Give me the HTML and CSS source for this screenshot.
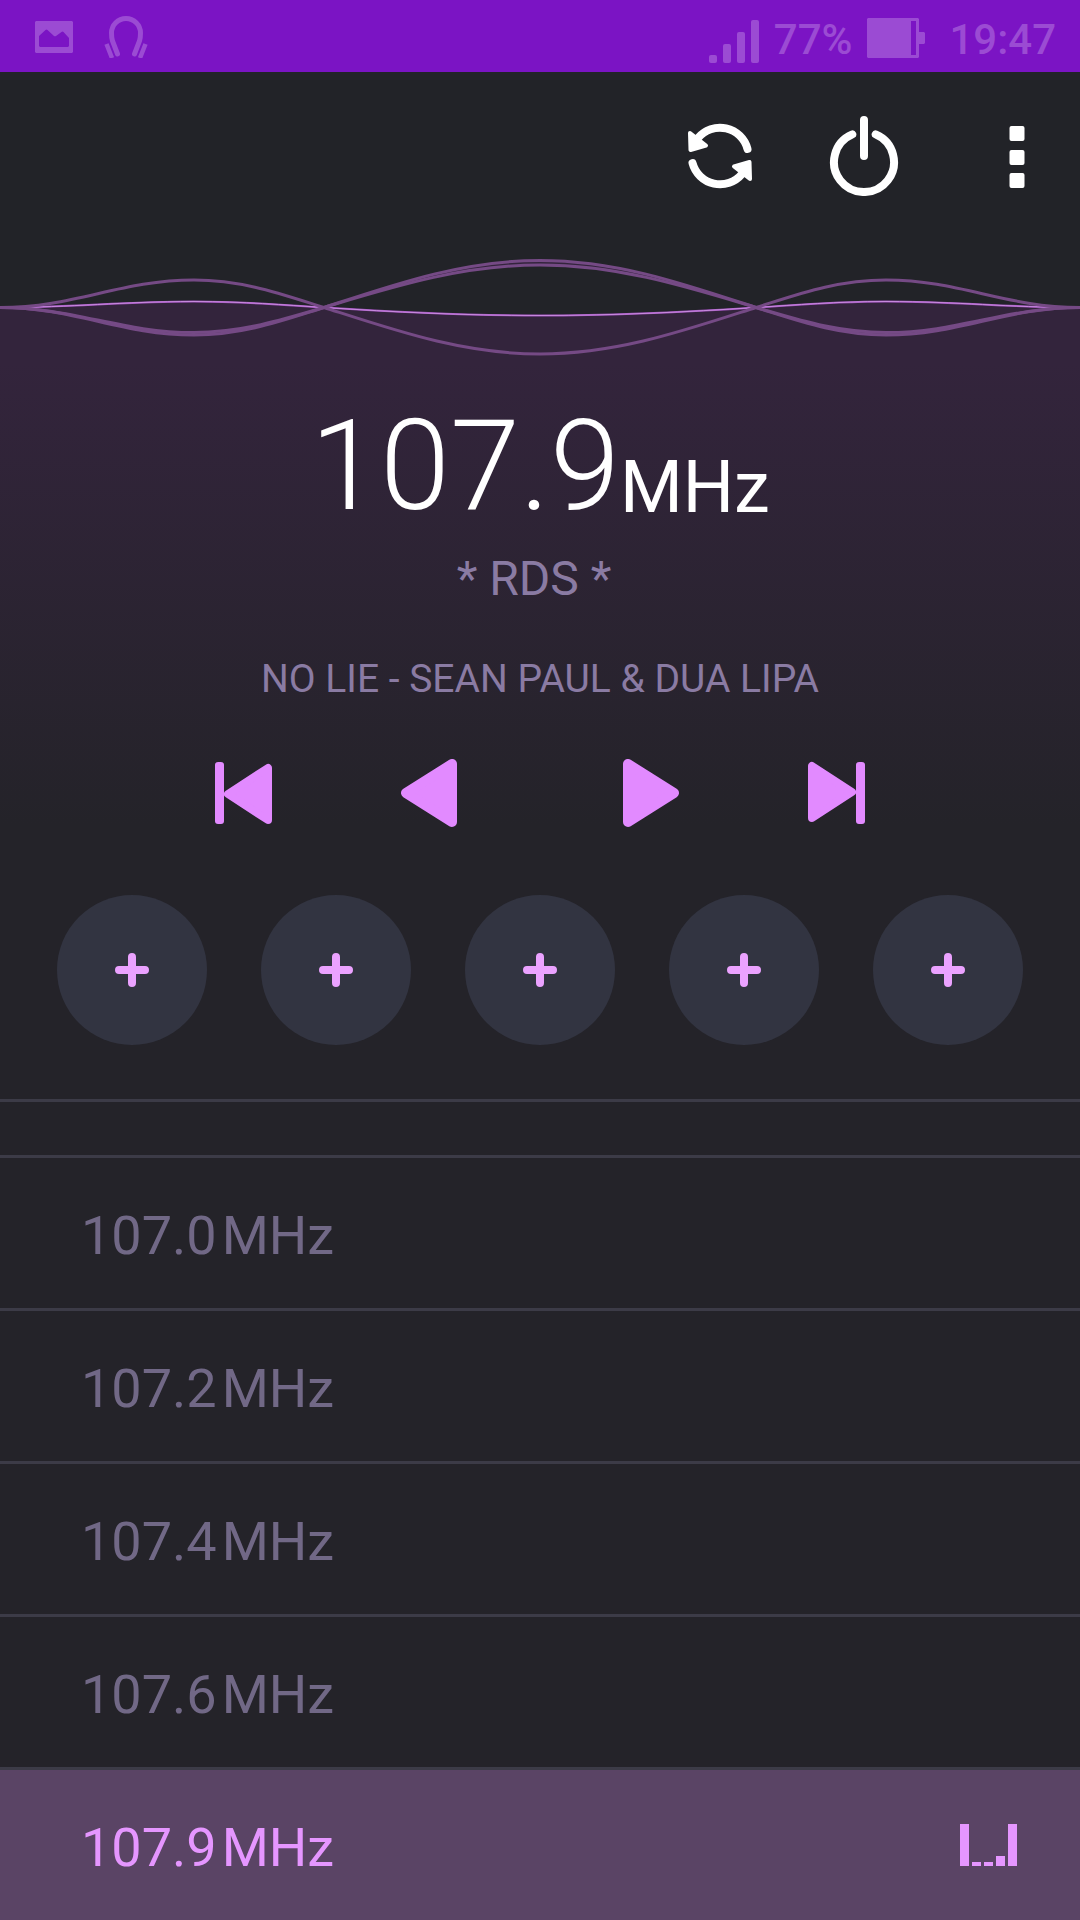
FILE: index.html
```html
<!DOCTYPE html>
<html lang="en">
<head>
<meta charset="utf-8">
<meta name="viewport" content="width=device-width, initial-scale=1">
<title>FM Radio</title>
<link rel="stylesheet" href="styles.css">
</head>
<body>
<header class="status">
  <div class="status-group status-left">
    <svg width="38" height="32" viewBox="0 0 38 32" aria-hidden="true"><path fill="currentColor" fill-rule="evenodd" d="M1 0H37L38 1V31L37 32H1L0 31V1ZM4 15V25L5 26H33L34 25V17L28.500 11Q27.500 10 26.500 11L21 15Q20 15.500 19 15L12.500 9Q11.500 8 10.500 9Z"/></svg>
    <svg width="44" height="42" viewBox="0 0 44 42" fill="none" stroke="currentColor" stroke-linecap="round" aria-hidden="true"><path stroke-width="5" d="M13.500 38L8.500 25Q7.500 22 7.500 17A14.300 14.300 0 0 1 36.500 17Q36.500 22 35.500 25L30.500 38"/><path stroke-width="4.500" stroke-linecap="butt" d="M2.500 28L8 42M41.500 28L36 42"/></svg>
  </div>
  <div class="status-group status-right">
    <svg width="50" height="43" viewBox="0 0 50 43" fill="currentColor" aria-hidden="true"><rect y="35" width="8" height="8" rx="2"/><rect x="14" y="24" width="8" height="19" rx="2"/><rect x="28" y="12" width="8" height="31" rx="2"/><rect x="42" width="8" height="43" rx="2"/></svg>
    <span class="battery-level">77%</span>
    <svg width="58" height="40" viewBox="0 0 58 40" aria-hidden="true"><path fill="currentColor" fill-rule="evenodd" d="M1 0H51L52 1V14H57L58 15V25L57 26H52V39L51 40H1L0 39V1ZM44 3V37H49V3Z"/></svg>
    <time class="clock">19:47</time>
  </div>
</header>

<main>
  <div class="toolbar">
    <button class="icon-button" type="button" aria-label="Rescan">
      <svg width="80" height="80" viewBox="-40 -40 80 80" aria-hidden="true">
        <g id="sync-half"><path d="M27.500 -7A28.500 28.500 0 0 0 -22 -18" fill="none" stroke="#fff" stroke-width="8" stroke-linecap="round"/><path d="M-30 -23L-14 -10.500L-29.500 -6Z" fill="#fff" stroke="#fff" stroke-width="4" stroke-linejoin="round"/></g>
        <use href="#sync-half" transform="rotate(180)"/>
      </svg>
    </button>
    <button class="icon-button" type="button" aria-label="Power">
      <svg width="80" height="80" viewBox="0 0 80 80" fill="none" stroke="#fff" stroke-width="8" stroke-linecap="round" aria-hidden="true"><path d="M40 4V40M28.300 18.400A30 30 0 1 0 51.700 18.400"/></svg>
    </button>
    <button class="icon-button icon-button-menu" type="button" aria-label="More options">
      <svg width="80" height="80" viewBox="0 0 80 80" fill="#fff" aria-hidden="true"><rect x="33.500" y="10" width="15" height="15" rx="2"/><rect x="33.500" y="34" width="15" height="15" rx="2"/><rect x="33.500" y="57" width="15" height="15" rx="2"/></svg>
    </button>
  </div>

  <svg class="wave" viewBox="0 0 1080 110" preserveAspectRatio="none" aria-hidden="true">
    <path fill="#33243c" d="M0 53.500C75 53.500 120 47.500 194 47.500C244 47.500 284 51 324 53.500C394 58 462 61.500 540 61.500C618 61.500 686 58 756 53.500C796 51 836 47.500 886 47.500C960 47.500 1005 53.500 1080 53.500V110H0Z"/>
    <path fill="#33243c" d="M324 53.500C394 31 462 6.500 540 6.500C618 6.500 686 31 756 53.500C686 33 618 11 540 11C462 11 394 33 324 53.500Z"/>
    <g fill="none">
      <path stroke="#a052bd" stroke-width="2" d="M0 53.500C75 53.500 120 47.500 194 47.500C244 47.500 284 51 324 53.500C394 58 462 61.500 540 61.500C618 61.500 686 58 756 53.500C796 51 836 47.500 886 47.500C960 47.500 1005 53.500 1080 53.500"/>
      <path stroke="#c88ade" stroke-width="1" d="M0 53.500C75 53.500 120 47.500 194 47.500C244 47.500 284 51 324 53.500C394 58 462 61.500 540 61.500C618 61.500 686 58 756 53.500C796 51 836 47.500 886 47.500C960 47.500 1005 53.500 1080 53.500"/>
      <g stroke="#754a85" stroke-width="3">
        <path d="M0 53.500C75 53.500 120 26 194 26C244 26 284 41 324 53.500C394 76 462 100 540 100C618 100 686 76 756 53.500C796 41 836 26 886 26C960 26 1005 53.500 1080 53.500"/>
        <path d="M0 53.500C75 53.500 120 81 194 81C244 81 284 66 324 53.500C394 30.500 462 6.500 540 6.500C618 6.500 686 30.500 756 53.500C796 66 836 81 886 81C960 81 1005 53.500 1080 53.500"/>
        <path d="M0 53.500C75 53.500 120 78.500 194 78.500C244 78.500 284 65 324 53.500C394 32.500 462 11 540 11C618 11 686 32.500 756 53.500C796 65 836 78.500 886 78.500C960 78.500 1005 53.500 1080 53.500"/>
      </g>
    </g>
  </svg>

  <section class="tuner">
    <h1 class="frequency"><span class="frequency-value">107.9</span><span class="frequency-unit">MHz</span></h1>
    <p class="station">* RDS *&nbsp;</p>
    <p class="song">NO LIE - SEAN PAUL &amp; DUA LIPA</p>

    <div class="transport">
      <div class="transport-group">
        <button class="transport-button" type="button" aria-label="Previous station">
          <svg width="64" height="68" viewBox="0 0 64 68" fill="currentColor" stroke="currentColor" stroke-linejoin="round" aria-hidden="true"><rect x="3" y="3" width="9" height="62" rx="3" stroke="none"/><path stroke-width="8" d="M16 35L56 9V61Z"/></svg>
        </button>
        <button class="transport-button" type="button" aria-label="Tune down">
          <svg width="64" height="68" viewBox="0 0 64 68" fill="currentColor" stroke="currentColor" stroke-linejoin="round" aria-hidden="true"><path stroke-width="10" d="M10 34L56 5V63Z"/></svg>
        </button>
      </div>
      <div class="transport-group">
        <button class="transport-button" type="button" aria-label="Tune up">
          <svg width="64" height="68" viewBox="0 0 64 68" fill="currentColor" stroke="currentColor" stroke-linejoin="round" aria-hidden="true"><path stroke-width="10" d="M54 34L8 5V63Z"/></svg>
        </button>
        <button class="transport-button" type="button" aria-label="Next station">
          <svg width="64" height="68" viewBox="0 0 64 68" fill="currentColor" stroke="currentColor" stroke-linejoin="round" aria-hidden="true"><rect x="52" y="3" width="9" height="62" rx="3" stroke="none"/><path stroke-width="8" d="M48 33L8 7V59Z"/></svg>
        </button>
      </div>
    </div>

    <div class="presets">
      <button class="preset" type="button" aria-label="Add preset 1"><svg width="34" height="34" viewBox="0 0 34 34" aria-hidden="true"><path d="M17 4V30M4 17H30"/></svg></button>
      <button class="preset" type="button" aria-label="Add preset 2"><svg width="34" height="34" viewBox="0 0 34 34" aria-hidden="true"><path d="M17 4V30M4 17H30"/></svg></button>
      <button class="preset" type="button" aria-label="Add preset 3"><svg width="34" height="34" viewBox="0 0 34 34" aria-hidden="true"><path d="M17 4V30M4 17H30"/></svg></button>
      <button class="preset" type="button" aria-label="Add preset 4"><svg width="34" height="34" viewBox="0 0 34 34" aria-hidden="true"><path d="M17 4V30M4 17H30"/></svg></button>
      <button class="preset" type="button" aria-label="Add preset 5"><svg width="34" height="34" viewBox="0 0 34 34" aria-hidden="true"><path d="M17 4V30M4 17H30"/></svg></button>
    </div>
  </section>

  <ul class="channels">
    <li><button class="channel" type="button"><span class="channel-name"><span>107.0</span><span>MHz</span></span></button></li>
    <li><button class="channel" type="button"><span class="channel-name"><span>107.2</span><span>MHz</span></span></button></li>
    <li><button class="channel" type="button"><span class="channel-name"><span>107.4</span><span>MHz</span></span></button></li>
    <li><button class="channel" type="button"><span class="channel-name"><span>107.6</span><span>MHz</span></span></button></li>
    <li><button class="channel channel-active" type="button" aria-current="true"><span class="channel-name"><span>107.9</span><span>MHz</span></span>
      <svg width="57" height="42" viewBox="0 0 57 42" fill="currentColor" aria-hidden="true"><path d="M0 0H9V42H0ZM12 38H21V42H12ZM24 38H33V42H24ZM36 32H45V42H36ZM48 0H57V42H48Z"/></svg></button></li>
  </ul>
</main>
</body>
</html>
```
FILE: styles.css
```css
* {
  box-sizing: border-box;
}

body {
  margin: 0;
  background: #242329;
  color: #fff;
  font-family: Roboto, "Liberation Sans", sans-serif;
}

button {
  padding: 0;
  border: 0;
  background: none;
  color: inherit;
  font: inherit;
  cursor: pointer;
}

svg {
  display: block;
  flex: none;
}

/* System status bar */
.status {
  display: flex;
  justify-content: space-between;
  height: 72px;
  padding: 0 24px 0 35px;
  background: #7b14c4;
  color: #9b4bd3;
  font-size: 42px;
  font-weight: 500;
  line-height: 48px;
}

.status-group {
  display: flex;
  align-items: center;
}

.status-left {
  gap: 31px;
  padding-top: 2px;
}

.status-right {
  gap: 15px;
}

.battery-level,
.clock {
  padding-top: 8px;
}

.status-right svg {
  margin-top: 4px;
}

.status-right svg:first-child {
  margin-top: 11px;
}

.clock {
  margin-left: 9px;
}

/* Actions */
.toolbar {
  display: flex;
  justify-content: flex-end;
  gap: 64px;
  padding: 44px 24px 58px;
  background: #222328;
}

.icon-button-menu {
  margin-left: 8px;
}

.wave {
  width: 100%;
  height: 110px;
  background: #222328;
}

/* Tuned station */
.tuner {
  display: flex;
  flex-direction: column;
  align-items: center;
  padding: 38px 0 54px;
  background: linear-gradient(#33243c, #242329 460px);
}

.frequency {
  display: flex;
  align-items: flex-end;
  margin: 0;
}

.frequency-value {
  font-size: 126px;
  font-weight: 300;
  line-height: 128px;
}

.frequency-unit {
  font-size: 72px;
  font-weight: 400;
  line-height: 84px;
}

.station,
.song {
  margin: 0;
  color: #8a7ba3;
}

.station {
  margin-top: 21px;
  font-size: 48px;
  line-height: 56px;
}

.song {
  margin-top: 48px;
  font-size: 39px;
  line-height: 48px;
}

.transport {
  display: flex;
  gap: 160px;
  margin-top: 56px;
  color: #e28aff;
}

.transport-group {
  display: flex;
  gap: 120px;
}

.presets {
  display: flex;
  gap: 54px;
  margin-top: 68px;
}

.preset {
  display: flex;
  align-items: center;
  justify-content: center;
  width: 150px;
  height: 150px;
  border-radius: 50%;
  background: #323441;
}

.preset path {
  stroke: #eba2ff;
  stroke-width: 8px;
  stroke-linecap: round;
}

/* Channel list */
.channels {
  margin: 0;
  padding: 53px 0 0;
  border-top: 3px solid #3c3b47;
  list-style: none;
}

.channel {
  display: flex;
  align-items: center;
  justify-content: space-between;
  width: 100%;
  height: 153px;
  padding: 0 63px 0 81px;
  border-top: 3px solid #3c3b47;
  color: #716886;
  font-size: 54px;
  line-height: 64px;
}

.channel-name {
  display: flex;
  gap: 5px;
  padding-top: 5px;
}

.channel-active {
  background: #5a4465;
  background-clip: padding-box;
  color: #e596ff;
}
```
